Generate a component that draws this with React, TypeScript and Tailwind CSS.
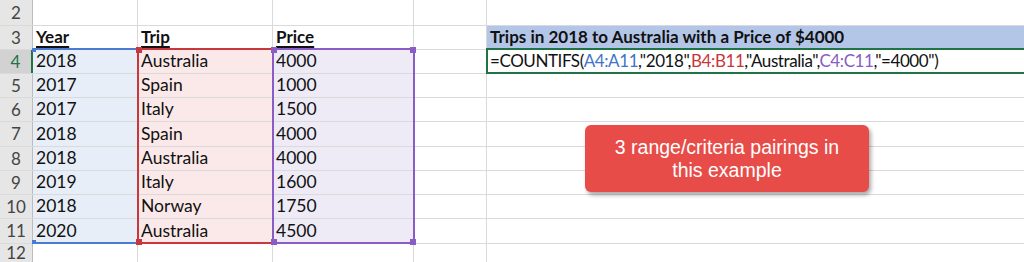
import React from "react";

type Row = {
  n: number;
  h: string;
  a?: string;
  b?: string;
  c?: string;
  bold?: boolean;
  range?: boolean;
  active?: boolean;
};

const rows: Row[] = [
  { n: 2, h: "h-[26px]" },
  { n: 3, h: "h-[24px]", a: "Year", b: "Trip", c: "Price", bold: true },
  { n: 4, h: "h-[24px]", a: "2018", b: "Australia", c: "4000", range: true, active: true },
  { n: 5, h: "h-[24px]", a: "2017", b: "Spain", c: "1000", range: true },
  { n: 6, h: "h-[24px]", a: "2017", b: "Italy", c: "1500", range: true },
  { n: 7, h: "h-[25px]", a: "2018", b: "Spain", c: "4000", range: true },
  { n: 8, h: "h-[24px]", a: "2018", b: "Australia", c: "4000", range: true },
  { n: 9, h: "h-[24px]", a: "2019", b: "Italy", c: "1600", range: true },
  { n: 10, h: "h-[24px]", a: "2018", b: "Norway", c: "1750", range: true },
  { n: 11, h: "h-[25px]", a: "2020", b: "Australia", c: "4500", range: true },
  { n: 12, h: "h-[19px]" },
];

function Cell({
  w,
  text,
  bold,
  bg,
}: {
  w: string;
  text?: string;
  bold?: boolean;
  bg?: string;
}) {
  return (
    <div
      className={`${w} ${bg ?? ""} h-full shrink-0 border-r border-[#d9d9d9] flex items-end px-[3px] pb-[1px] leading-[22px] text-[#111] ${
        bold ? "text-[17px]" : "text-[17.5px]"
      }`}
    >
      {text && (
        <span className={bold ? "font-bold underline underline-offset-[3px] decoration-[1.5px]" : ""}>
          {text}
        </span>
      )}
    </div>
  );
}

function Handles({ color }: { color: string }) {
  return (
    <>
      <div className={`absolute -left-[3px] -top-[3px] w-[6px] h-[6px] ${color}`} />
      <div className={`absolute -left-[3px] -bottom-[3px] w-[6px] h-[6px] ${color}`} />
    </>
  );
}

export default function App() {
  return (
    <div
      className="relative w-[1024px] h-[262px] overflow-hidden bg-white"
      style={{ fontFamily: "Lato, 'Open Sans', sans-serif" }}
    >
      {rows.map((r) => (
        <div key={r.n} className={`flex ${r.h} border-b border-[#dadada]`}>
          <div
            className={`w-[33px] h-full shrink-0 flex items-center justify-center text-[17px] border-r ${
              r.active
                ? "bg-[#d2d2d2] text-[#217346] border-r-2 border-r-[#217346]"
                : "bg-[#e6e6e6] text-[#444] border-[#bdbdbd]"
            }`}
          >
            {r.n}
          </div>
          <Cell w="w-[105px]" text={r.a} bold={r.bold} bg={r.range ? "bg-[#e8eef8]" : undefined} />
          <Cell w="w-[135px]" text={r.b} bold={r.bold} bg={r.range ? "bg-[#fbe9e9]" : undefined} />
          <Cell w="w-[141px]" text={r.c} bold={r.bold} bg={r.range ? "bg-[#eeebf7]" : undefined} />
          <div className="w-[73px] h-full shrink-0 border-r border-[#d9d9d9]" />
          <div
            className={`flex-1 h-full flex items-end px-[3px] pb-[1px] text-[17px] leading-[22px] text-[#111] ${
              r.n === 3 ? "bg-[#b4c6e7] font-bold" : ""
            }`}
          >
            {r.n === 3 && <span>Trips in 2018 to Australia with a Price of $4000</span>}
            {r.n === 4 && (
              <span className="whitespace-nowrap tracking-[-0.42px]">
                =COUNTIFS(<span className="text-[#3f74c8]">A4:A11</span>,"2018",
                <span className="text-[#c8373c]">B4:B11</span>,"Australia",
                <span className="text-[#8a5cc5]">C4:C11</span>,"=4000")
              </span>
            )}
          </div>
        </div>
      ))}

      {/* Range highlight borders (overlay) */}
      <div className="absolute left-[33px] top-[48px] w-[105px] h-[196px] border-y-2 border-[#4a7bd0]">
        <div className="absolute -left-[1px] -top-[2px] w-[4px] h-[4px] bg-[#4a7bd0]" />
        <div className="absolute -left-[1px] -bottom-[2px] w-[4px] h-[4px] bg-[#4a7bd0]" />
      </div>
      <div className="absolute left-[137px] top-[48px] w-[137px] h-[196px] border-2 border-[#c8373c]">
        <Handles color="bg-[#c8373c]" />
      </div>
      <div className="absolute left-[272px] top-[48px] w-[143px] h-[196px] border-2 border-[#8a5cc5]">
        <Handles color="bg-[#8a5cc5]" />
        <div className="absolute -right-[3px] -top-[3px] w-[6px] h-[6px] bg-[#8a5cc5]" />
        <div className="absolute -right-[3px] -bottom-[3px] w-[6px] h-[6px] bg-[#8a5cc5]" />
      </div>

      {/* Active cell border */}
      <div className="absolute left-[486px] top-[48px] w-[545px] h-[26px] border-2 border-[#217346]" />

      {/* Callout */}
      <div
        className="absolute left-[585px] top-[125px] w-[284px] h-[67px] rounded-[6px] bg-[#e84c48] shadow-[2px_3px_4px_rgba(0,0,0,0.35)] flex flex-col items-center justify-center text-white text-[19.5px] leading-[23px] text-center"
        style={{ fontFamily: "'Liberation Sans', Arial, sans-serif" }}
      >
        <span>3 range/criteria pairings in</span>
        <span>this example</span>
      </div>
    </div>
  );
}
